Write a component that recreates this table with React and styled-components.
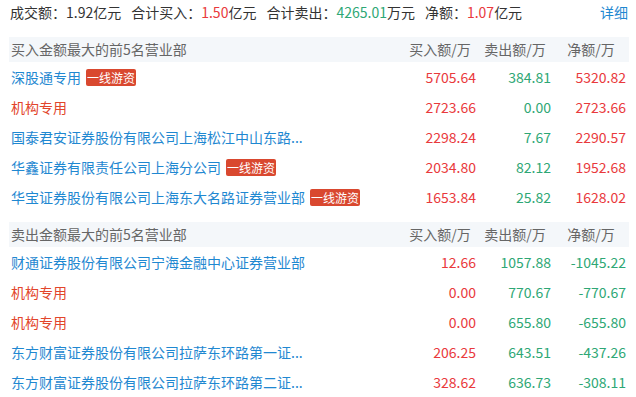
import React from "react";
import styled, { createGlobalStyle } from "styled-components";

const RED = "#e9393c";
const GREEN = "#2ea775";
const BLUE = "#1f88d1";

const buyRows = [
  { name: "深股通专用", tag: true, buy: "5705.64", sell: "384.81", net: "5320.82" },
  { name: "机构专用", org: true, buy: "2723.66", sell: "0.00", net: "2723.66" },
  { name: "国泰君安证券股份有限公司上海松江中山东路...", buy: "2298.24", sell: "7.67", net: "2290.57" },
  { name: "华鑫证券有限责任公司上海分公司", tag: true, buy: "2034.80", sell: "82.12", net: "1952.68" },
  { name: "华宝证券股份有限公司上海东大名路证券营业部", tag: true, buy: "1653.84", sell: "25.82", net: "1628.02" },
];

const sellRows = [
  { name: "财通证券股份有限公司宁海金融中心证券营业部", buy: "12.66", sell: "1057.88", net: "-1045.22" },
  { name: "机构专用", org: true, buy: "0.00", sell: "770.67", net: "-770.67" },
  { name: "机构专用", org: true, buy: "0.00", sell: "655.80", net: "-655.80" },
  { name: "东方财富证券股份有限公司拉萨东环路第一证...", buy: "206.25", sell: "643.51", net: "-437.26" },
  { name: "东方财富证券股份有限公司拉萨东环路第二证...", buy: "328.62", sell: "636.73", net: "-308.11" },
];

const tone = (v) => (v.startsWith("-") ? GREEN : RED);

const Block = ({ title, rows }) => (
  <Section>
    <HeadRow>
      <HeadName>{title}</HeadName>
      <HeadCell>买入额/万</HeadCell>
      <HeadCell>卖出额/万</HeadCell>
      <HeadCell $last>净额/万</HeadCell>
    </HeadRow>
    {rows.map((r, i) => (
      <Row key={i}>
        <Name>
          <NameText $org={r.org}>{r.name}</NameText>
          {r.tag && <Tag>一线游资</Tag>}
        </Name>
        <Num $color={RED}>{r.buy}</Num>
        <Num $color={GREEN}>{r.sell}</Num>
        <Num $color={tone(r.net)} $last>{r.net}</Num>
      </Row>
    ))}
  </Section>
);

const App = () => {
  return (
    <>
      <GlobalStyle />
      <Wrapper>
        <Summary>
          <SummaryItems>
            <span>成交额：1.92亿元</span>
            <span>
              合计买入：<Val $color={RED}>1.50</Val>亿元
            </span>
            <span>
              合计卖出：<Val $color={GREEN}>4265.01</Val>万元
            </span>
            <span>
              净额：<Val $color={RED}>1.07</Val>亿元
            </span>
          </SummaryItems>
          <More>详细</More>
        </Summary>
        <Block title="买入金额最大的前5名营业部" rows={buyRows} />
        <Block title="卖出金额最大的前5名营业部" rows={sellRows} />
      </Wrapper>
    </>
  );
};

export default App;

const GlobalStyle = createGlobalStyle`
  body {
    margin: 0;
    background: #fff;
    font-family: "Noto Sans CJK SC", "Noto Sans", sans-serif;
    font-size: 14px;
    color: #333;
  }
`;

const Wrapper = styled.div`
  padding: 0 7px 0 9px;
`;

const Summary = styled.div`
  display: flex;
  justify-content: space-between;
  align-items: center;
  height: 25px;
  line-height: 25px;
  padding: 0 1px 0 1px;
  margin-bottom: 12px;
`;

const SummaryItems = styled.div`
  display: flex;
  gap: 10px;
  color: #333;
`;

const Val = styled.span`
  color: ${({ $color }) => $color};
`;

const More = styled.a`
  color: ${BLUE};
  cursor: pointer;
`;

const Section = styled.section`
  & + & {
    margin-top: 10px;
  }
`;

const HeadRow = styled.div`
  display: grid;
  grid-template-columns: 392px 75px 75px 75px;
  height: 25px;
  line-height: 25px;
  background: #f4f7fa;
  color: #666;
`;

const HeadName = styled.div`
  padding-left: 2px;
`;

const HeadCell = styled.div`
  text-align: center;
  padding-left: ${({ $last }) => ($last ? "5px" : "3px")};
`;

const Row = styled.div`
  display: grid;
  grid-template-columns: 392px 75px 75px 75px;
  height: 30px;
  line-height: 30px;
  align-items: center;
`;

const Name = styled.div`
  display: flex;
  align-items: center;
  gap: 5px;
  padding-left: 2px;
  white-space: nowrap;
`;

const NameText = styled.span`
  color: ${({ $org }) => ($org ? "#e2452b" : BLUE)};
`;

const Tag = styled.span`
  display: inline-block;
  height: 17px;
  line-height: 17px;
  padding: 0 1px;
  border-radius: 2px;
  background: #d9482f;
  color: #fff;
  font-size: 12px;
`;

const Num = styled.div`
  text-align: right;
  color: ${({ $color }) => $color};
`;
